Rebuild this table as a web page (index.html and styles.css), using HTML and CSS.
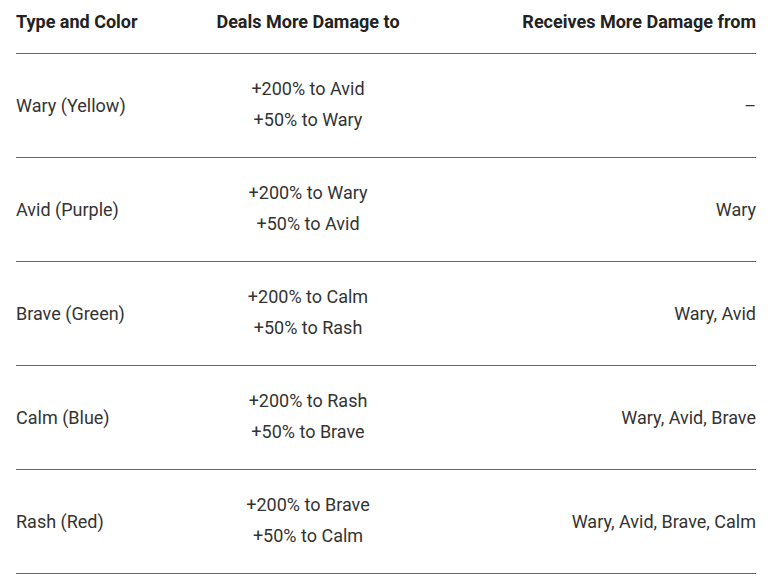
FILE: index.html
```html
<!DOCTYPE html>
<html lang="en">
<head>
<meta charset="utf-8">
<title>Types</title>
<link rel="stylesheet" href="styles.css">
</head>
<body>
<table class="types">
  <colgroup>
    <col class="c1"><col class="c2"><col class="c3">
  </colgroup>
  <thead>
    <tr><th class="left">Type and Color</th><th class="mid">Deals More Damage to</th><th class="right">Receives More Damage from</th></tr>
  </thead>
  <tbody>
    <tr><td class="left">Wary (Yellow)</td><td class="mid">+200% to Avid<br>+50% to Wary</td><td class="right">–</td></tr>
    <tr><td class="left">Avid (Purple)</td><td class="mid">+200% to Wary<br>+50% to Avid</td><td class="right">Wary</td></tr>
    <tr><td class="left">Brave (Green)</td><td class="mid">+200% to Calm<br>+50% to Rash</td><td class="right">Wary, Avid</td></tr>
    <tr><td class="left">Calm (Blue)</td><td class="mid">+200% to Rash<br>+50% to Brave</td><td class="right">Wary, Avid, Brave</td></tr>
    <tr><td class="left">Rash (Red)</td><td class="mid">+200% to Brave<br>+50% to Calm</td><td class="right">Wary, Avid, Brave, Calm</td></tr>
  </tbody>
</table>
</body>
</html>
```
FILE: styles.css
```css
html, body {
  margin: 0;
  padding: 0;
  background: #ffffff;
}
body {
  font-family: Roboto, "Liberation Sans", sans-serif;
  font-size: 18px;
  color: #333333;
}
.types {
  margin-left: 16px;
  width: 740px;
  border-collapse: collapse;
  table-layout: fixed;
}
.c1 { width: 200px; }
.c2 { width: 184px; }
.types th,
.types td {
  padding: 0;
  line-height: 31px;
  border-bottom: 1px solid #666666;
  vertical-align: middle;
}
.types th {
  font-weight: 700;
  padding-top: 6px;
  padding-bottom: 16px;
  color: #222222;
}
.types td {
  padding-top: 19px;
  padding-bottom: 22px;
}
.types td.left,
.types td.right {
  padding-top: 20px;
  padding-bottom: 21px;
}
.left { text-align: left; }
.mid { text-align: center; }
.right { text-align: right; }
```
